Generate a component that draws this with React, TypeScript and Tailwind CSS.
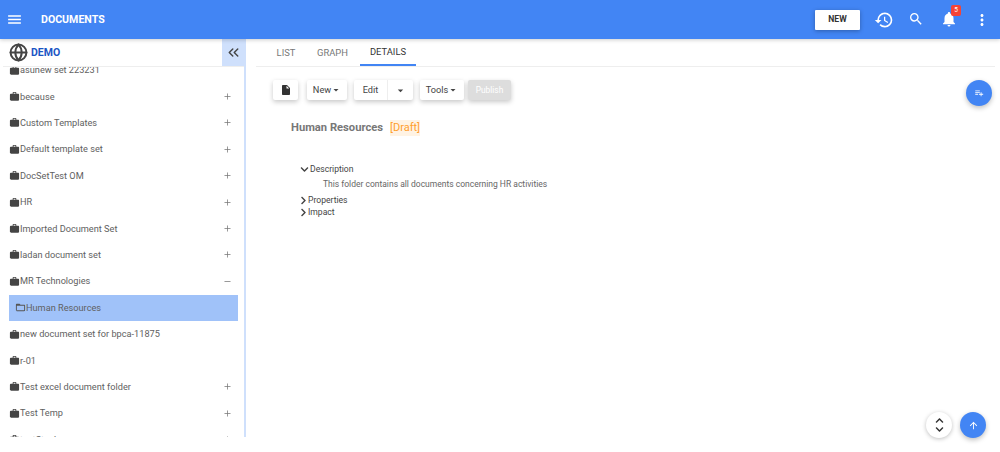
import React from "react";
import { MdMenu, MdHistory, MdSearch, MdNotifications, MdMoreVert, MdWork, MdInsertDriveFile, MdOutlineFolderOpen, MdArrowUpward, MdPlaylistAdd, MdArrowDropDown } from "react-icons/md";
import { FaChevronDown, FaChevronRight, FaChevronUp } from "react-icons/fa";
import { LuGlobe, LuChevronsLeft, LuPlus, LuMinus } from "react-icons/lu";

const rows: { t: string; m?: "+" | "-"; sel?: boolean }[] = [
  { t: "asunew set 223231" },
  { t: "because", m: "+" },
  { t: "Custom Templates", m: "+" },
  { t: "Default template set", m: "+" },
  { t: "DocSetTest OM", m: "+" },
  { t: "HR", m: "+" },
  { t: "Imported Document Set", m: "+" },
  { t: "ladan document set", m: "+" },
  { t: "MR Technologies", m: "-" },
  { t: "Human Resources", sel: true },
  { t: "new document set for bpca-11875" },
  { t: "r-01" },
  { t: "Test excel document folder", m: "+" },
  { t: "Test Temp", m: "+" },
  { t: "testStock", m: "+" },
];

function Btn({ children, cls = "" }: { children: React.ReactNode; cls?: string }) {
  return (
    <div className={`h-[20px] flex items-center justify-center bg-white rounded-[2px] shadow-[0_2px_5px_rgba(0,0,0,0.22)] text-[9.2px] text-[#444] ${cls}`}>
      {children}
    </div>
  );
}

export default function App() {
  return (
    <div className="w-[1000px] h-[452px] bg-white overflow-hidden flex flex-col font-['Roboto',sans-serif]">
      <header className="h-[39px] shrink-0 bg-[#4285f4] shadow-[0_1px_4px_rgba(0,0,0,0.2)] flex items-center text-white relative z-10">
        <MdMenu className="ml-[6px] -mt-[1px] text-[17px]" />
        <span className="ml-[18px] text-[10.6px] font-bold">DOCUMENTS</span>
        <div className="ml-auto w-[45px] h-[20px] bg-white rounded-[1px] shadow-[0_1px_4px_rgba(0,0,0,0.3)] flex items-center justify-center text-[8.6px] font-bold text-[#333]">NEW</div>
        <MdHistory className="ml-[14px] mt-[1px] text-[20px]" />
        <MdSearch className="ml-[14px] -mt-[1px] text-[16px]" />
        <div className="relative ml-[16px] mr-[10px] -mt-[1px]">
          <MdNotifications className="text-[18px]" />
          <span className="absolute -top-[5px] left-[11px] w-[10px] h-[11px] rounded-[2px] bg-[#f44336] text-[6.5px] flex items-center justify-center">5</span>
        </div>
        <MdMoreVert className="ml-[5px] mr-[9px] text-[18px]" />
      </header>

      <div className="flex h-[398px]">
        <aside className="w-[246px] shrink-0 border-r-2 border-[#cfe0fc] flex flex-col overflow-hidden">
          <div className="h-[28px] shrink-0 flex items-center relative border-b border-[#eeeeee] ml-[3px]">
            <LuGlobe className="ml-[6px] text-[19px] text-[#444] stroke-[2.5]" />
            <span className="ml-[3px] pt-px text-[10.5px] font-bold text-[#1b55c4]">DEMO</span>
            <div className="ml-auto w-[22px] h-full bg-[#cfe0fc] flex items-center justify-center">
              <LuChevronsLeft className="text-[17px] text-[#444]" />
            </div>
          </div>
          <div className="flex-1 overflow-hidden">
            <div className="-mt-[10px]">
              {rows.map((r) => (
                <div
                  key={r.t}
                  className={`h-[26.4px] flex items-center text-[9.2px] text-[#616161] ${r.sel ? "ml-[9px] mr-[6px] pl-[6px] bg-[#a0c2f9]" : "ml-[9px] mr-[12px]"}`}
                >
                  {r.sel ? (
                    <MdOutlineFolderOpen className="text-[11px] text-[#555]" />
                  ) : (
                    <MdWork className="text-[11px] text-[#444]" />
                  )}
                  <span className="whitespace-nowrap">{r.t}</span>
                  {r.m === "+" && <LuPlus className="ml-auto text-[9px] text-[#777]" />}
                  {r.m === "-" && <LuMinus className="ml-auto text-[9px] text-[#777]" />}
                </div>
              ))}
            </div>
          </div>
        </aside>

        <main className="flex-1 relative">
          <nav className="h-[28px] ml-[10px] mr-[5px] border-b border-[#eeeeee] flex items-center text-[9.4px] text-[#777]">
            <span className="w-[38px] ml-[11px] pt-px text-center">LIST</span>
            <span className="w-[55px] pt-px text-center">GRAPH</span>
            <span className="relative w-[56px] h-full pt-px flex items-center justify-center text-[#333] border-b-2 border-[#4285f4]">DETAILS</span>
          </nav>

          <div className="flex items-center mt-[13px] ml-[27px]">
            <Btn cls="w-[25px]"><MdInsertDriveFile className="text-[12px] text-[#333]" /></Btn>
            <Btn cls="w-[40px] ml-[9px]">New<MdArrowDropDown className="text-[12px] -mx-px" /></Btn>
            <Btn cls="w-[59px] ml-[7px]">
              <span className="flex-1 text-center border-r border-[#eeeeee] leading-[20px]">Edit</span>
              <span className="w-[25px] flex justify-center"><MdArrowDropDown className="text-[13px]" /></span>
            </Btn>
            <Btn cls="w-[44px] ml-[7px]">Tools<MdArrowDropDown className="text-[12px] -mx-px" /></Btn>
            <Btn cls="w-[43px] ml-[4px] !bg-[#dddddd] !text-white !text-[8.4px]">Publish</Btn>
          </div>

          <div className="flex items-center mt-[18px] ml-[45px] h-[20px]">
            <span className="font-bold text-[11.2px] text-[#777]">Human Resources</span>
            <span className="ml-[7px] text-[11px] text-[#ff9e2c] bg-[#fff3e4]">[Draft]</span>
          </div>

          <div className="mt-[25px] ml-[54px] text-[8.6px] text-[#444]">
            <div className="h-[12px] flex items-center">
              <FaChevronDown className="text-[9px] mr-[1px]" />Description
            </div>
            <div className="h-[19px] flex items-center ml-[23px] text-[#666] text-[8.5px]">This folder contains all documents concerning HR activities</div>
            <div className="h-[12px] flex items-center">
              <FaChevronRight className="text-[9px] -ml-[1px]" />Properties
            </div>
            <div className="h-[12px] flex items-center">
              <FaChevronRight className="text-[9px] -ml-[1px]" />Impact
            </div>
          </div>

          <div className="absolute top-[41px] right-[8px] w-[26px] h-[26px] rounded-full bg-[#4285f4] shadow-[0_2px_5px_rgba(0,0,0,0.25)] flex items-center justify-center text-white">
            <MdPlaylistAdd className="text-[10px]" />
          </div>
          <div className="absolute top-[373px] right-[48px] w-[26px] h-[26px] rounded-full bg-white shadow-[0_1px_4px_rgba(0,0,0,0.25)] flex flex-col items-center justify-center text-[#333]">
            <FaChevronUp className="text-[9px]" />
            <FaChevronDown className="text-[9px]" />
          </div>
          <div className="absolute top-[373px] right-[14px] w-[26px] h-[26px] rounded-full bg-[#4285f4] shadow-[0_2px_5px_rgba(0,0,0,0.25)] flex items-center justify-center text-white">
            <MdArrowUpward className="text-[11px]" />
          </div>
        </main>
      </div>
    </div>
  );
}
